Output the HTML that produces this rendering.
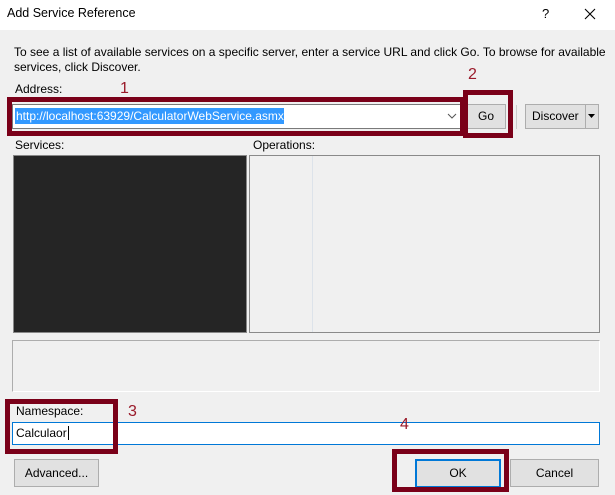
<!DOCTYPE html>
<html><head><style>
*{margin:0;padding:0;box-sizing:border-box}
body{width:615px;height:495px;background:#f0f0f0;font-family:"Liberation Sans",sans-serif;font-size:12px;color:#000;position:relative;overflow:hidden}
.a{position:absolute}
.btn{position:absolute;background:#e1e1e1;border:1px solid #adadad;text-align:center}
.red{position:absolute;border:5px solid #7a0019}
.num{position:absolute;color:#9a1a2a;font-size:16px}
</style></head><body>
<div class="a" style="left:0;top:0;width:615px;height:30px;background:#fff"></div>
<div class="a" style="left:7px;top:6px;font-size:12.5px">Add Service Reference</div>
<div class="a" style="left:542px;top:6px;font-size:13px">?</div>
<svg class="a" style="left:584px;top:8px" width="12" height="12"><path d="M1 1L11 11M11 1L1 11" stroke="#000" stroke-width="1.1"/></svg>
<div class="a" style="left:14px;top:45px;line-height:15px;width:600px">To see a list of available services on a specific server, enter a service URL and click Go. To browse for available services, click Discover.</div>
<div class="a" style="left:15px;top:82px">Address:</div>
<div class="num" style="left:120px;top:80px">1</div>
<div class="num" style="left:468px;top:66px">2</div>
<div class="a" style="left:12px;top:104px;width:450px;height:25px;background:#fff;border:1px solid #7a7a7a"></div>
<div class="a" style="left:15px;top:108px;width:269px;height:16px;background:#3399ff"></div>
<div class="a" style="left:16px;top:109px;color:#fff">http://localhost:63929/CalculatorWebService.asmx</div>
<svg class="a" style="left:447px;top:113px" width="10" height="6"><path d="M1 1L5 5L9 1" stroke="#555" fill="none"/></svg>
<div class="red" style="left:7px;top:97px;width:458px;height:39px"></div>
<div class="btn" style="left:466px;top:104px;width:40px;height:25px;line-height:23px">Go</div>
<div class="red" style="left:463px;top:90px;width:50px;height:48px"></div>
<div class="a" style="left:516px;top:105px;width:1px;height:24px;background:#ccc"></div>
<div class="btn" style="left:525px;top:104px;width:74px;height:25px;line-height:23px;text-align:left;padding-left:6px">Discover</div>
<div class="a" style="left:585px;top:105px;width:1px;height:23px;background:#adadad"></div>
<svg class="a" style="left:588px;top:114px" width="7" height="4"><path d="M0 0H7L3.5 4Z" fill="#000"/></svg>
<div class="a" style="left:15px;top:138px">Services:</div>
<div class="a" style="left:253px;top:138px">Operations:</div>
<div class="a" style="left:13px;top:155px;width:234px;height:178px;background:#252525;border:1px solid #888"></div>
<div class="a" style="left:249px;top:155px;width:351px;height:178px;background:#f0f0f0;border:1px solid #8a8a8a"></div>
<div class="a" style="left:312px;top:156px;width:1px;height:176px;background:#dde3ea"></div>
<div class="a" style="left:12px;top:340px;width:588px;height:52px;border:1px solid #adadad;border-right-color:#fff;border-bottom-color:#fff"></div>
<div class="a" style="left:16px;top:404px">Namespace:</div>
<div class="num" style="left:128px;top:403px">3</div>
<div class="a" style="left:12px;top:422px;width:588px;height:23px;background:#fff;border:1px solid #0078d7"></div>
<div class="a" style="left:16px;top:426px">Calculaor<span style="border-left:1px solid #000;margin-left:1px"></span></div>
<div class="num" style="left:400px;top:416px">4</div>
<div class="red" style="left:5px;top:399px;width:113px;height:55px"></div>
<div class="btn" style="left:14px;top:459px;width:85px;height:28px;line-height:26px">Advanced...</div>
<div class="btn" style="left:415px;top:459px;width:86px;height:29px;line-height:25px;border:2px solid #0078d7">OK</div>
<div class="red" style="left:392px;top:449px;width:117px;height:43px"></div>
<div class="btn" style="left:510px;top:459px;width:89px;height:28px;line-height:26px">Cancel</div>
</body></html>
